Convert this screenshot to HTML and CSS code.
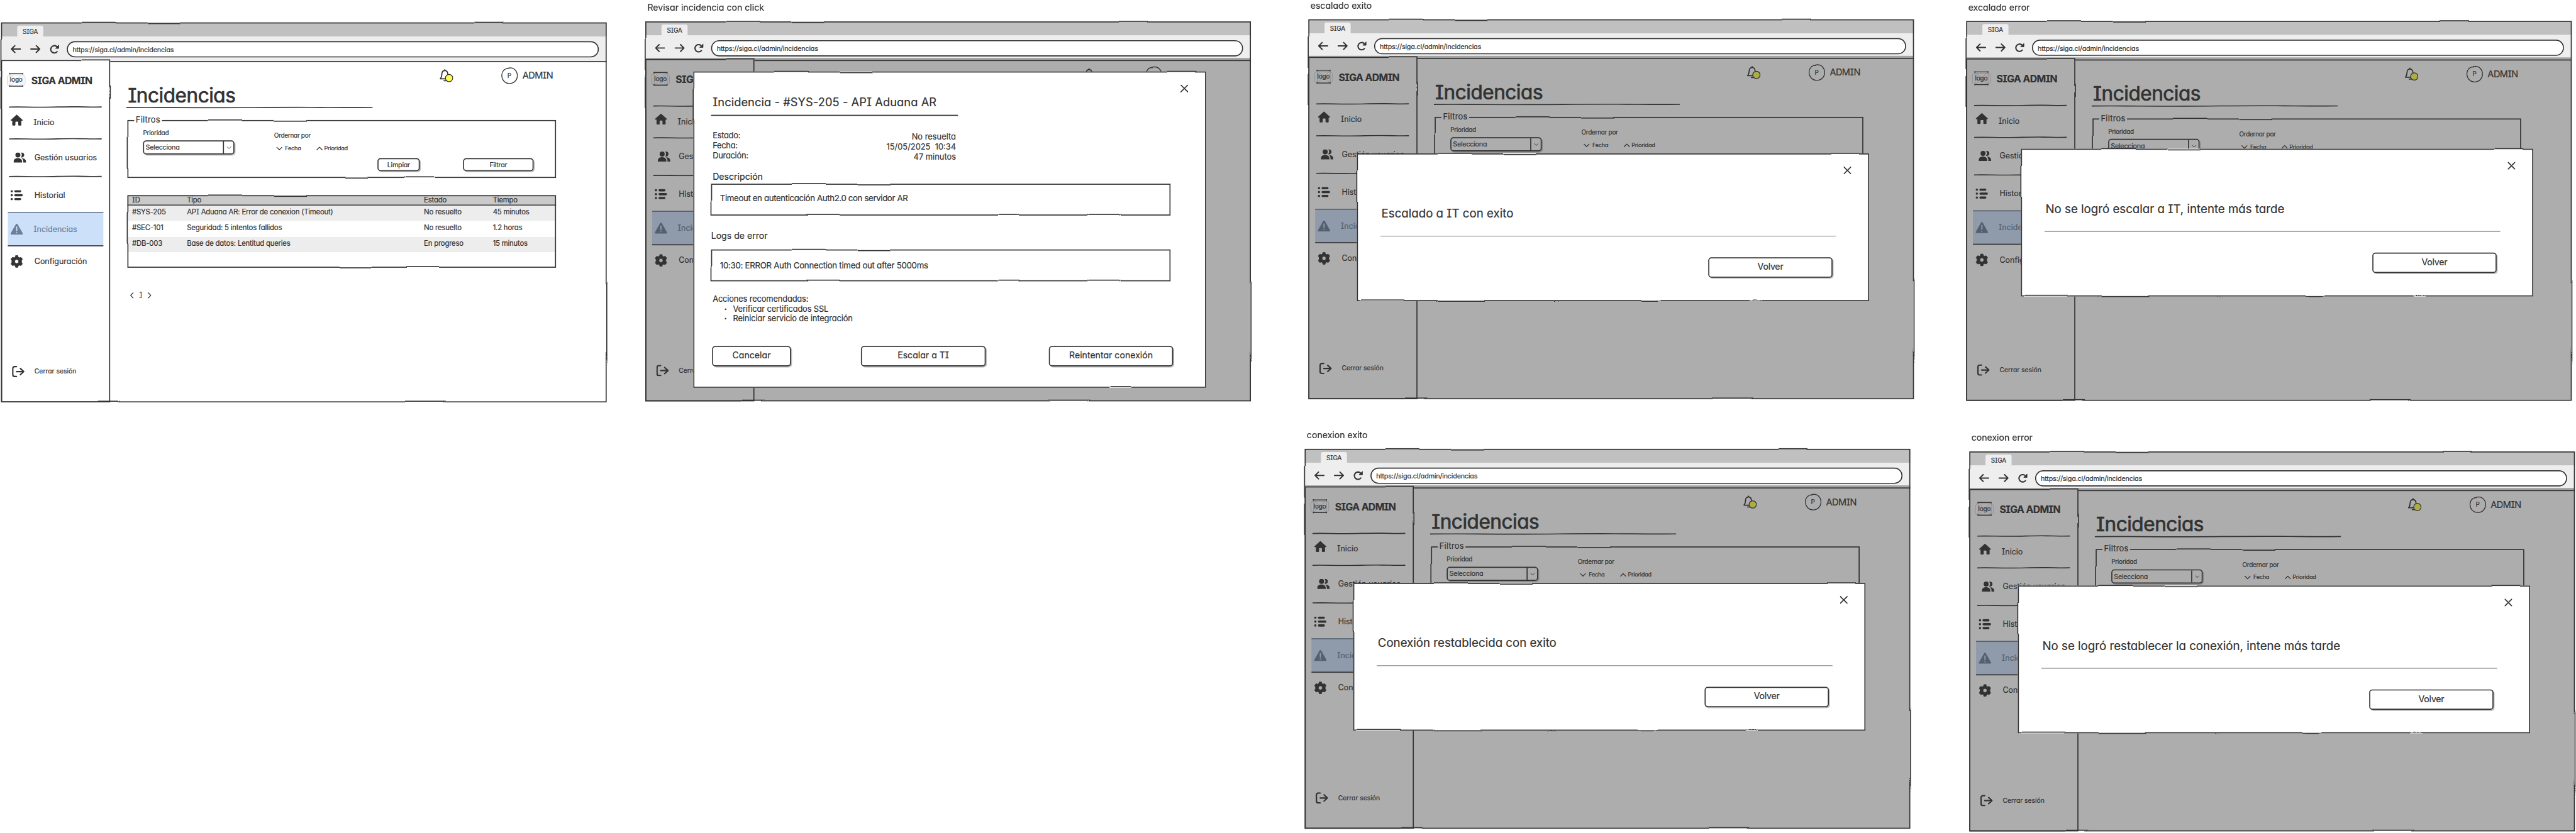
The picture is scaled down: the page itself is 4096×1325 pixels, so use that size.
FILE: index.html
```html
<!DOCTYPE html>
<html lang="es">
<head>
<meta charset="utf-8">
<title>SIGA Admin</title>
<link rel="stylesheet" href="styles.css">
</head>
<body>
<svg class="defs" width="0" height="0" aria-hidden="true">
  <filter id="wobble" x="-5%" y="-12%" width="110%" height="124%" color-interpolation-filters="sRGB">
    <feTurbulence type="fractalNoise" baseFrequency="0.008" numOctaves="1" seed="4" result="n"/>
    <feDisplacementMap in="SourceGraphic" in2="n" scale="4" xChannelSelector="R" yChannelSelector="G"/>
  </filter>
  <symbol id="i-back" viewBox="0 0 20 16"><path d="M19 8H2M8.500 1.500 2 8l6.500 6.500" fill="none" stroke="#333" stroke-width="2.400" stroke-linecap="round" stroke-linejoin="round"/></symbol>
  <symbol id="i-fwd" viewBox="0 0 20 16"><path d="M1 8h17M11.500 1.500 18 8l-6.500 6.500" fill="none" stroke="#333" stroke-width="2.400" stroke-linecap="round" stroke-linejoin="round"/></symbol>
  <symbol id="i-reload" viewBox="0 0 20 18"><path d="M15.500 14A7 7 0 1 1 14.500 4" fill="none" stroke="#333" stroke-width="2.500" stroke-linecap="round"/><path d="M18.600 1.200v6.600h-6.400z" fill="#333" stroke="#333" stroke-linejoin="round"/></symbol>
  <symbol id="i-home" viewBox="0 0 24 22"><path d="M12 .6 23.300 10.800c.5.6.2 1.400-.6 1.400h-1.800V20c0 .9-.6 1.500-1.500 1.500h-3.200c-.8 0-1.300-.5-1.300-1.300v-5c0-.8-.5-1.200-1.200-1.200h-3c-.7 0-1.200.4-1.200 1.200v5c0 .8-.5 1.300-1.300 1.300H5c-.9 0-1.500-.6-1.500-1.500v-7.800H1.300c-.8 0-1.100-.8-.6-1.400z" fill="#333"/></symbol>
  <symbol id="i-users" viewBox="0 0 24 20"><g fill="#333"><circle cx="8.300" cy="5" r="4.800"/><path d="M14 .5a4.800 4.800 0 1 1 0 9 7 7 0 0 0 0-9zM0 19.500v-1.800C0 13.500 3.300 11 8 11s8.300 2.500 8.300 6.700v1.800zM15.300 11c5 .2 8.500 2.800 8.500 6.500v2h-5.300v-2c0-2.800-1.200-5-3.200-6.500z"/></g></symbol>
  <symbol id="i-list" viewBox="0 0 24 20"><path d="M9.500 2.500h9M9.500 10h12M9.500 17.500h9M2.300 2.500h.2M2.300 10h.2M2.300 17.500h.2" stroke="#333" stroke-width="4.400" stroke-linecap="round"/></symbol>
  <symbol id="i-warn" viewBox="0 0 24 22"><path d="M10.600 1.200c.6-1 2.200-1 2.800 0l10.200 18c.6 1.100 0 2.300-1.300 2.300H1.700c-1.300 0-1.900-1.200-1.300-2.300z" fill="#6b7f99"/><path d="M12 7v7M12 17.800v.2" stroke="#cde0fa" stroke-width="2.300" stroke-linecap="round"/></symbol>
  <symbol id="i-gear" viewBox="0 0 24 24"><path fill="#333" fill-rule="evenodd" d="M10 .5h4l.9 3.300 1.900 1.100 3.300-.9 2.900 3.400-1.700 3v3.200l1.700 3-2.900 3.400-3.300-.9-1.900 1.100-.9 3.300h-4l-.9-3.300-1.900-1.100-3.300.9L1 16.600l1.700-3v-3.200L1 7.400 3.900 4l3.300.9 1.900-1.100zM12 8.200a3.800 3.800 0 1 0 0 7.600 3.800 3.800 0 0 0 0-7.600z" stroke="#333" stroke-linejoin="round"/></symbol>
  <symbol id="i-exit" viewBox="0 0 24 22"><path d="M8.500 1.500H5C3 1.500 1.500 3 1.500 5v12c0 2 1.500 3.500 3.500 3.500h3.500M8.500 11H22M16 5l6.500 6-6.500 6" fill="none" stroke="#333" stroke-width="2.600" stroke-linecap="round" stroke-linejoin="round"/></symbol>
  <symbol id="i-bell" viewBox="0 0 26 26"><path d="M10 3.200c-3.800.4-5.500 3-5.600 6.500-.1 4-.8 6.500-3 9.300h16.500c-2-2.800-2.200-5.500-2.300-9.300-.1-3.500-1.800-6.100-5.600-6.500zM10 3V1.500M8.500 22.500h4" fill="none" stroke="#333" stroke-width="2.100" stroke-linecap="round" stroke-linejoin="round"/><circle cx="18.200" cy="17.500" r="7" fill="#ffff50" stroke="#333" stroke-width="1.500"/></symbol>
  <symbol id="i-down" viewBox="0 0 12 7"><path d="M1 1l5 5 5-5" fill="none" stroke="#333" stroke-width="1.500" stroke-linecap="round"/></symbol>
  <symbol id="i-up" viewBox="0 0 12 7"><path d="M1 6l5-5 5 5" fill="none" stroke="#333" stroke-width="1.500" stroke-linecap="round"/></symbol>
  <symbol id="i-prev" viewBox="0 0 7 12"><path d="M6 1 1.200 6 6 11" fill="none" stroke="#333" stroke-width="1.500" stroke-linecap="round"/></symbol>
  <symbol id="i-next" viewBox="0 0 7 12"><path d="m1 1 4.800 5L1 11" fill="none" stroke="#333" stroke-width="1.500" stroke-linecap="round"/></symbol>
  <symbol id="i-close" viewBox="0 0 16 16"><path d="M1 1l14 14M15 1 1 15" fill="none" stroke="#333" stroke-width="2.200" stroke-linecap="round"/></symbol>
  <symbol id="i-logo" viewBox="0 0 36 28"><path d="M6 2 31 26M31 2 6 26M6 2v24M31 2v24" stroke="#ccc" stroke-width="1.200"/><rect x=".8" y="4.300" width="34.400" height="21" rx="5" fill="none" stroke="#ccc" stroke-width="1.200"/><path d="M5 1.800h26M5 26.200h26M5.500.5v3M30.800.5v3M5.500 24.500v3M30.800 24.500v3" stroke="#333" stroke-width="1.600"/></symbol>
  <symbol id="i-avatar" viewBox="0 0 32 32"><path d="M13 2.200C6 2.500 1.200 8 1.100 15c-.1 8.500 5.500 15.800 14.400 16 9 .1 15.300-6.500 15.400-15C31 8 25.500 1.200 17 1c-1.800 0-3 .2-4 .8v1.800" fill="none" stroke="#333" stroke-width="1.600"/></symbol>
  <symbol id="i-line" viewBox="0 0 400 4" preserveAspectRatio="none"><path d="M0 2.200C50 1.400 90 2.800 150 2.500S250 1.300 300 1.700 370 2.500 400 2" fill="none" stroke="#333" stroke-width="2"/></symbol>
</svg>

<template id="window">
  <div class="window">
    <div class="tabs"><div class="tab">SIGA</div></div>
    <div class="toolbar">
      <svg class="back"><use href="#i-back"/></svg>
      <svg class="fwd"><use href="#i-fwd"/></svg>
      <svg class="reload"><use href="#i-reload"/></svg>
      <div class="url">https://siga.cl/admin/incidencias</div>
    </div>
    <div class="page">
      <nav class="sidebar frame-line">
        <div class="brand">
          <div class="logo"><svg><use href="#i-logo"/></svg><span>logo</span></div>
          <div class="brand-name">SIGA ADMIN</div>
        </div>
        <svg class="rule"><use href="#i-line"/></svg>
        <div class="item home"><svg><use href="#i-home"/></svg><span>Inicio</span></div>
        <svg class="rule"><use href="#i-line"/></svg>
        <div class="item users"><svg><use href="#i-users"/></svg><span>Gestión usuarios</span></div>
        <svg class="rule"><use href="#i-line"/></svg>
        <div class="item list"><svg><use href="#i-list"/></svg><span>Historial</span></div>
        <div class="item active"><svg><use href="#i-warn"/></svg><span>Incidencias</span></div>
        <div class="item gear"><svg><use href="#i-gear"/></svg><span>Configuración</span></div>
        <div class="item exit"><svg><use href="#i-exit"/></svg><span>Cerrar sesión</span></div>
      </nav>
      <main class="content">
        <header class="topbar">
          <svg class="bell"><use href="#i-bell"/></svg>
          <div class="avatar"><svg><use href="#i-avatar"/></svg><span>P</span></div>
          <span class="user">ADMIN</span>
        </header>
        <h1 class="title"><span>Incidencias</span></h1>
        <svg class="title-line"><use href="#i-line"/></svg>
        <section class="filters frame-line">
          <div class="legend">Filtros</div>
          <div class="fields">
            <div class="field">
              <label>Prioridad</label>
              <div class="select"><span>Selecciona</span><i><svg><use href="#i-down"/></svg></i></div>
            </div>
            <div class="order">
              <label>Ordernar por</label>
              <div class="sorts"><svg><use href="#i-down"/></svg><span class="s1">Fecha</span><svg><use href="#i-up"/></svg><span class="s2">Prioridad</span></div>
            </div>
          </div>
          <div class="actions"><div class="btn clear">Limpiar</div><div class="btn apply">Filtrar</div></div>
        </section>
        <section class="table frame-line">
          <div class="row head"><span>ID</span><span>Tipo</span><span>Estado</span><span>Tiempo</span></div>
          <div class="row odd"><span>#SYS-205</span><span>API Aduana AR: Error de conexion (Timeout)</span><span>No resuelto</span><span>45 minutos</span></div>
          <div class="row even"><span>#SEC-101</span><span>Seguridad: 5 intentos fallidos</span><span>No resuelto</span><span>1.2 horas</span></div>
          <div class="row odd"><span>#DB-003</span><span>Base de datos: Lentitud queries</span><span>En progreso</span><span>15 minutos</span></div>
        </section>
        <div class="pager"><svg><use href="#i-prev"/></svg><span>1</span><svg><use href="#i-next"/></svg></div>
      </main>
    </div>
  </div>
</template>

<div class="viewport">
<div class="board">
  <section class="frame f1"></section>

  <section class="frame f2"><h2>Revisar incidencia con click</h2>
    <div class="modal detail frame-line">
      <div class="detail-head"><h3>Incidencia - #SYS-205 - API Aduana AR</h3><svg class="close"><use href="#i-close"/></svg></div>
      <dl class="facts">
        <dt>Estado:</dt><dd>No resuelta</dd>
        <dt>Fecha:</dt><dd>15/05/2025&nbsp; 10:34</dd>
        <dt>Duración:</dt><dd>47 minutos</dd>
      </dl>
      <h4>Descripción</h4>
      <div class="box frame-line">Timeout en autenticación Auth2.0 con servidor AR</div>
      <h4 class="logs">Logs de error</h4>
      <div class="box log frame-line">10:30: ERROR Auth Connection timed out after 5000ms</div>
      <div class="steps"><p>Acciones recomendadas:</p><ul><li>Verificar certificados SSL</li><li>Reiniciar servicio de integración</li></ul></div>
      <div class="buttons"><div class="btn cancel">Cancelar</div><div class="btn escalate">Escalar a TI</div><div class="btn retry">Reintentar conexión</div></div>
    </div>
  </section>

  <section class="frame f3"><h2>escalado exito</h2>
    <div class="modal notice frame-line"><svg class="close"><use href="#i-close"/></svg><p>Escalado a IT con exito</p><div class="btn">Volver</div></div>
  </section>
  <section class="frame f4"><h2>excalado error</h2>
    <div class="modal notice frame-line"><svg class="close"><use href="#i-close"/></svg><p>No se logró escalar a IT, intente más tarde</p><div class="btn">Volver</div></div>
  </section>
  <section class="frame f5"><h2>conexion exito</h2>
    <div class="modal notice frame-line"><svg class="close"><use href="#i-close"/></svg><p>Conexión restablecida con exito</p><div class="btn">Volver</div></div>
  </section>
  <section class="frame f6"><h2>conexion error</h2>
    <div class="modal notice frame-line"><svg class="close"><use href="#i-close"/></svg><p>No se logró restablecer la conexión, intene más tarde</p><div class="btn">Volver</div></div>
  </section>
</div>
</div>
<script src="app.js"></script>
</body>
</html>
```
FILE: styles.css
```css
* { box-sizing: border-box; margin: 0; padding: 0; }
html, body { background: #fff; }
body {
  font-family: Inter, "Open Sans", sans-serif;
  font-feature-settings: "cv11", "cv08";
  color: #333;
  font-size: 15px;
  white-space: nowrap;
  -webkit-text-stroke: .25px #333;
}
svg { display: block; flex: none; }
.defs { position: absolute; }
.viewport { width: 100vw; height: 100vh; overflow: clip; contain: strict; }
.board { position: relative; width: 4934px; height: 1596px; transform: scale(0.83015); transform-origin: 0 0; }

/* hand-drawn outline painted over an element's edge */
.frame-line { position: relative; }
.frame-line::before {
  content: ""; position: absolute; inset: 0; border: 2px solid #333;
  filter: url(#wobble); pointer-events: none;
}

/* screens on the canvas */
.frame { position: absolute; width: 1160px; }
.f1 { left: 2px; top: 43px; }
.f2 { left: 1236px; top: 3px; }
.f3 { left: 2506px; top: -1px; }
.f4 { left: 3766px; top: 2px; }
.f5 { left: 2499px; top: 822px; }
.f6 { left: 3772px; top: 827px; }
.frame h2 { font-size: 17px; font-weight: 400; line-height: 24px; margin-bottom: 14px; padding-left: 4px; }

.window { position: relative; height: 728px; display: flex; flex-direction: column; background: #fff; }
.window::after { content: ""; position: absolute; inset: 0; border: 2px solid #333; filter: url(#wobble); }
.tabs { height: 27px; background: #c0c0c0; padding-left: 31px; display: flex; align-items: flex-end; }
.tab { width: 50px; height: 21px; line-height: 24px; text-align: center; background: #eee; border-radius: 4px 4px 0 0; font-size: 12px; letter-spacing: -.02em; }
.toolbar { height: 48px; background: #eee; display: flex; align-items: center; padding: 0 15px 0 18px; }
.back, .fwd { width: 20px; height: 16px; }
.fwd { margin-left: 18px; }
.reload { width: 20px; height: 18px; margin: 0 14px 0 16px; }
.url { flex: 1; height: 31px; line-height: 28px; border: 2px solid #333; border-radius: 16px; background: #fff; padding-left: 9px; font-size: 13px; letter-spacing: -.018em; }

.page { flex: 1; display: flex; min-height: 0; }
.sidebar { width: 209px; margin-top: -3px; background: #fff; display: flex; flex-direction: column; }
.brand { height: 88px; display: flex; align-items: flex-start; padding: 24px 0 0 11px; }
.logo { display: grid; width: 36px; height: 28px; place-items: center; }
.logo svg, .logo span { grid-area: 1 / 1; }
.logo svg { width: 36px; height: 28px; }
.logo span { font-size: 12px; line-height: 24px; letter-spacing: -.014em; }
.brand-name { font-weight: 700; font-size: 19px; line-height: 28px; margin: 2px 0 0 11px; letter-spacing: -.035em; }
.rule { height: 4px; width: 178px; margin: 0 0 -1px 15px; }
.item { display: flex; align-items: center; height: 59px; padding-left: 18px; line-height: 20px; }
.item svg { width: 24px; height: 22px; }
.item span { margin-left: 20px; }
.home { height: 58px; padding-bottom: 1px; }
.home svg { margin-bottom: 10px; }
.users { height: 69px; padding-left: 24px; }
.users span { margin-left: 16px; }
.users svg, .list svg { height: 20px; }
.list { height: 67px; padding-top: 2px; }
.list span, .gear span { margin-left: 22px; }
.active { height: 66px; margin-left: 13px; width: 183px; padding-left: 5px; background: #cde0fa; color: #6b7f99; border-top: 2px solid #6b7f99; border-bottom: 2px solid #333; -webkit-text-stroke-color: #6b7f99; }
.gear { height: 58px; }
.gear svg { height: 24px; }
.exit { height: 40px; margin: auto 0 39px; padding-left: 21px; font-size: 12.5px; }
.exit span { margin-left: 19px; }

.content { flex: 1; margin-top: -1px; border-top: 2px solid #333; padding-left: 31px; }
.topbar { height: 41px; padding: 10px 103px 0 0; display: flex; align-items: center; justify-content: flex-end; }
.bell { width: 26px; height: 26px; }
.avatar { display: grid; place-items: center; width: 32px; height: 32px; margin: 0 9px 0 92px; }
.avatar svg, .avatar span { grid-area: 1 / 1; }
.avatar svg { width: 32px; height: 32px; }
.avatar span { font-size: 12px; line-height: 16px; }
.user { font-size: 17.500px; line-height: 30px; letter-spacing: -.035em; }
.title { height: 44px; line-height: 45.600px; padding-left: 3px; font-size: 38px; font-weight: 400; letter-spacing: -.015em; -webkit-text-stroke: .9px #333; }
.title-line { width: 472px; height: 4px; }
.filters { margin: 22px 0 0 2px; width: 821px; height: 111px; display: flex; flex-direction: column; }
.legend { position: absolute; left: 13px; top: -9px; height: 20px; line-height: 18px; padding: 0 3px; background: #fff; font-size: 15.500px; letter-spacing: .018em; }
.fields { display: flex; padding: 17px 0 0 30px; }
.fields label { display: block; line-height: 16px; font-size: 12px; letter-spacing: -.028em; }
.field { width: 175px; }
.select { margin-top: 6px; height: 27px; border: 2px solid #333; border-radius: 6px; display: flex; justify-content: space-between; line-height: 22px; padding-left: 3px; font-size: 13px; letter-spacing: -.024em; box-shadow: 2px 2px 0 #bbb; }
.select i { width: 20px; border-left: 2px solid #333; display: grid; place-items: center; }
.select svg { width: 9px; height: 6px; }
.order { margin: 5px 0 0 76px; }
.sorts { display: flex; align-items: center; margin: 8px 0 0 4px; line-height: 16px; font-size: 11px; letter-spacing: -.028em; }
.sorts svg { width: 12px; height: 7px; margin-right: 5px; }
.s1 { width: 60px; }
.sorts .s1 + svg { margin-right: 3px; }
.btn { border: 2px solid #333; border-radius: 6px; background: #fff; text-align: center; box-shadow: 2px 2px 0 #bbb; }
.actions { display: flex; gap: 83px; padding: 7px 0 0 479px; }
.actions .btn { height: 25px; line-height: 20px; font-size: 13px; letter-spacing: -.026em; }
.clear { width: 81px; }
.apply { width: 135px; }
.table { margin: 33px 0 0 2px; width: 821px; height: 139px; background: #fff; font-size: 13.700px; letter-spacing: -.018em; }
.row { display: grid; grid-template-columns: 105px 454px 132px 1fr; padding-left: 9px; line-height: 20px; }
.head { height: 20px; line-height: 19px; background: #cacaca; border-bottom: 2px solid #444; }
.odd { height: 29px; padding-top: 2px; background: #ededed; }
.even { height: 31px; padding-top: 3px; }
.pager { display: flex; align-items: center; margin: 46px 0 0 7px; height: 14px; }
.pager svg { width: 7px; height: 12px; }
.pager span { width: 27px; text-align: center; line-height: 14px; font-size: 12px; text-decoration: underline; margin-top: -3px; }

.shade { position: absolute; left: 1px; right: 1px; top: 70px; bottom: 1px; background: rgba(51, 51, 51, .4); }
/* parts fully behind a dialog are not painted */
.f2 .title, .f2 .title-line, .f2 .filters, .frame:not(.f1) .table, .frame:not(.f1) .actions, .f2 .pager, .f3 .pager, .frame:not(.f1) .pager span { visibility: hidden; }

/* dialogs */
.modal { position: absolute; background: #fff; width: 981px; left: 93px; }
.f2 .modal { left: 92px; top: 134px; width: 982px; height: 606px; display: flex; flex-direction: column; padding-left: 34px; }
.f3 .modal, .f5 .modal, .f6 .modal { top: 295px; height: 283px; }
.f4 .modal { top: 283px; left: 105px; height: 283px; }
.close { width: 15px; height: 15px; }
.notice { display: flex; flex-direction: column; align-items: flex-end; padding: 25px 34px 0 0; }
.notice p { align-self: stretch; margin: 55px 29px 0 45px; height: 63.500px; line-height: 40px; padding-left: 2px; font-size: 22.500px; border-bottom: 1.500px solid #555; }
.notice .btn { width: 238px; height: 39px; line-height: 32px; margin: 40px 36px 0 0; font-size: 17px; letter-spacing: -.015em; }
.detail-head { display: flex; justify-content: space-between; padding: 0 34px 0 0; height: 85px; }
.detail-head .close { margin-top: 25px; }
.detail-head h3 { width: 473px; height: 85px; padding: 44px 0 0 3px; line-height: 30px; font-size: 22px; font-weight: 400; letter-spacing: .004em; border-bottom: 2px solid #333; }
.facts { display: grid; grid-template-columns: 1fr auto; width: 469px; padding: 28px 0 0 3px; line-height: 19px; font-size: 15.500px; }
.facts dt { letter-spacing: -.02em; }
.facts dd { text-align: right; position: relative; top: 3px; }
.detail h4 { font-weight: 400; font-size: 17px; line-height: 24px; margin: 18.500px 0 2.500px 3px; }
.detail h4.logs { margin: 27px 0 14px 0; }
.box { width: 880px; height: 61px; line-height: 56px; padding-left: 17px; font-size: 16px; letter-spacing: -.029em; }
.log { line-height: 61px; letter-spacing: -.022em; }
.steps { margin: 24px 0 0 3px; line-height: 19px; font-size: 15.500px; letter-spacing: -.012em; }
.steps ul { list-style: none; padding-left: 22px; }
.steps li::before { content: "·"; display: inline-block; width: 17px; font-weight: 700; }
.buttons { display: flex; padding: 43px 0 0 2px; }
.buttons .btn { height: 39px; line-height: 32px; font-size: 17px; }
.cancel { width: 151px; }
.escalate { width: 239px; margin: 0 121px 0 134px; }
.retry { width: 238px; }
```
FILE: app.js
```js
// Every screen shares the same window; those with a dialog get a shade under it.
const tpl = document.getElementById('window');
document.querySelectorAll('.frame').forEach(frame => {
  const win = tpl.content.cloneNode(true);
  const modal = frame.querySelector('.modal');
  if (modal) {
    const shade = document.createElement('div');
    shade.className = 'shade';
    win.querySelector('.page').after(shade);
  }
  frame.insertBefore(win, modal);
});
```
